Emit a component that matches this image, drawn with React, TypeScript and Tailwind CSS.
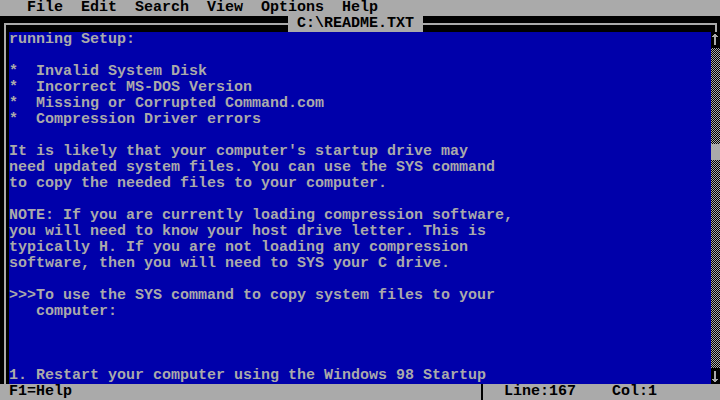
const GRAY = "bg-[#aaaaaa]";

const LINES = [
  "running Setup:",
  "",
  "*  Invalid System Disk",
  "*  Incorrect MS-DOS Version",
  "*  Missing or Corrupted Command.com",
  "*  Compression Driver errors",
  "",
  "It is likely that your computer's startup drive may",
  "need updated system files. You can use the SYS command",
  "to copy the needed files to your computer.",
  "",
  "NOTE: If you are currently loading compression software,",
  "you will need to know your host drive letter. This is",
  "typically H. If you are not loading any compression",
  "software, then you will need to SYS your C drive.",
  "",
  ">>>To use the SYS command to copy system files to your",
  "   computer:",
  "",
  "",
  "",
  "1. Restart your computer using the Windows 98 Startup",
];

function Arrow({ down = false }: { down?: boolean }) {
  return (
    <svg width="9" height="16" viewBox="0 0 9 16" shapeRendering="crispEdges" className="block">
      <g fill="#aaaaaa" transform={down ? "matrix(1 0 0 -1 0 16)" : undefined}>
        <rect x="3" y="2" width="2" height="1" />
        <rect x="2" y="3" width="4" height="1" />
        <rect x="1" y="4" width="6" height="1" />
        <rect x="3" y="5" width="2" height="8" />
      </g>
    </svg>
  );
}

export default function App() {
  return (
    <div className="flex h-[400px] w-[720px] flex-col overflow-hidden bg-black font-['Liberation_Mono',monospace] text-[15px] font-bold leading-4">
      {/* menu bar */}
      <div className={`h-4 whitespace-pre text-black ${GRAY}`}>
        {"   File  Edit  Search  View  Options  Help"}
      </div>

      {/* window title row */}
      <div className="flex h-4">
        <div className="flex w-[288px]">
          <div className="ml-1 mt-[7px] h-[9px] flex-1 border-l-2 border-t-2 border-[#aaaaaa]" />
        </div>
        <div className={`w-[135px] whitespace-pre text-black ${GRAY}`}>{" C:\\README.TXT "}</div>
        <div className="mt-[7px] h-[9px] w-[294px] border-r-2 border-t-2 border-[#aaaaaa]" />
      </div>

      {/* editor body */}
      <div className="flex h-[352px]">
        <div className="w-[9px] pl-1">
          <div className="h-full w-[2px] bg-[#aaaaaa]" />
        </div>
        <div className="flex w-[702px] flex-col bg-[#0000aa] text-[#aaaaaa]">
          {LINES.map((line, i) => (
            <div key={i} className="h-4 whitespace-pre">
              {line}
            </div>
          ))}
        </div>
        <div className="flex w-[9px] flex-col">
          <Arrow />
          <div className="h-[96px] bg-[image:repeating-conic-gradient(#aaaaaa_0_25%,#000000_0_50%)] bg-[length:2px_2px]" />
          <div className={`h-4 ${GRAY}`} />
          <div className="flex-1 bg-[image:repeating-conic-gradient(#aaaaaa_0_25%,#000000_0_50%)] bg-[length:2px_2px]" />
          <Arrow down />
        </div>
      </div>

      {/* status bar */}
      <div className={`flex h-4 text-black ${GRAY}`}>
        <span className="w-[477px] pl-[9px]">F1=Help</span>
        <div className="w-[9px] pl-1">
          <div className="h-full w-[2px] bg-black" />
        </div>
        <span className="whitespace-pre">{"  Line:167    Col:1"}</span>
      </div>
    </div>
  );
}
